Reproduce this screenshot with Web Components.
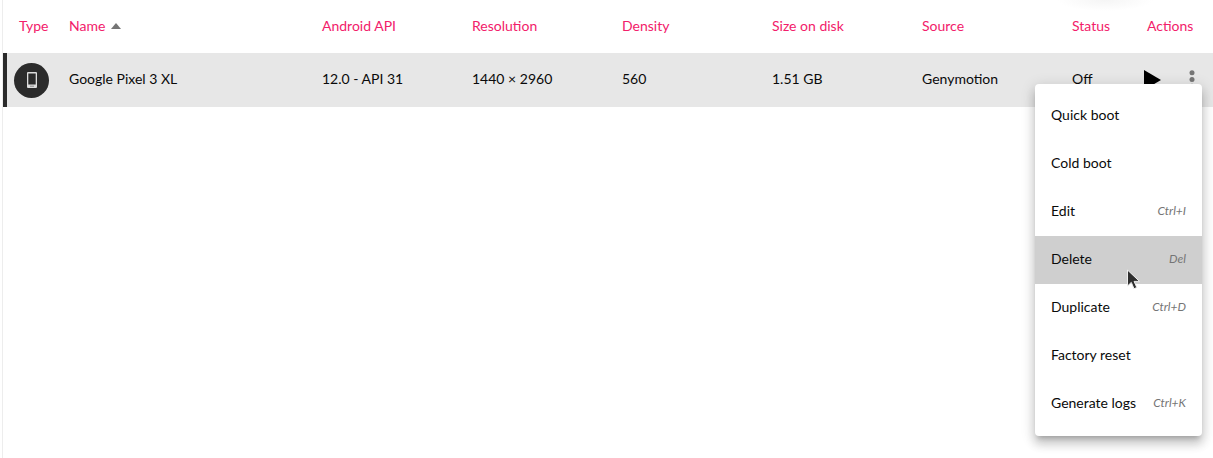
<!DOCTYPE html>
<html>
<head>
<meta charset="utf-8">
<title>Devices</title>
<style>
  html, body { margin: 0; height: 100%; background: #fff; overflow: hidden; }
  body { font: 14px Lato, sans-serif; color: #0a0a0a; }
</style>
</head>
<body>
<device-table>
  <device-row slot="rows" name="Google Pixel 3 XL" api="12.0 - API 31" res="1440 × 2960" density="560" size="1.51 GB" source="Genymotion" status="Off"></device-row>
  <device-menu slot="menu">
    <menu-item>Quick boot</menu-item>
    <menu-item>Cold boot</menu-item>
    <menu-item shortcut="Ctrl+I">Edit</menu-item>
    <menu-item shortcut="Del" active>Delete</menu-item>
    <menu-item shortcut="Ctrl+D">Duplicate</menu-item>
    <menu-item>Factory reset</menu-item>
    <menu-item shortcut="Ctrl+K">Generate logs</menu-item>
  </device-menu>
</device-table>

<script>
  "use strict";

  // shared by the header and the rows, so the columns line up
  const COLUMNS = "66px 253px 150px 150px 150px 150px 150px 75px 66px";

  class DeviceTable extends HTMLElement {
    constructor() {
      super();
      this.attachShadow({ mode: "open" });
      this.shadowRoot.innerHTML = `
        <style>
          :host { display: block; position: relative; height: 458px; box-sizing: border-box;
                  border-left: 1px solid #ededed; margin-left: 2px; overflow: hidden; }
          .head { display: grid; grid-template-columns: ${COLUMNS}; height: 53px; align-items: center;
                  color: #f2206a;
                  background: radial-gradient(ellipse 48px 11px at 1102px 0, #f5f5f5, rgba(255,255,255,0)); }
          .head span { display: flex; align-items: center; gap: 6px; padding-bottom: 2px; }
          .head span:first-child { padding-left: 16px; }
          .caret { width: 0; height: 0; border: 5px solid transparent; border-top: 0;
                   border-bottom: 6px solid #757575; }
          .cursor { position: absolute; left: 1123px; top: 269px; width: 15px; height: 22px; }
        </style>
        <div class="head">
          <span>Type</span>
          <span>Name <i class="caret"></i></span>
          <span>Android API</span>
          <span>Resolution</span>
          <span>Density</span>
          <span>Size on disk</span>
          <span>Source</span>
          <span>Status</span>
          <span>Actions</span>
        </div>
        <slot name="rows"></slot>
        <slot name="menu"></slot>
        <svg class="cursor" viewBox="0 0 15 22">
          <path d="M1.5 1v16l3.8-3.6 2.7 6.3 2.8-1.2-2.7-6.1h5.4z" fill="#2e2e2e" stroke="#eee" stroke-width="1"/>
        </svg>`;
    }
  }

  class DeviceRow extends HTMLElement {
    constructor() {
      super();
      this.attachShadow({ mode: "open" });
      const a = (n) => this.getAttribute(n);
      this.shadowRoot.innerHTML = `
        <style>
          :host { display: grid; grid-template-columns: ${COLUMNS}; height: 54px; align-items: center;
                  background: #e7e7e7; box-shadow: inset 4px 0 0 #2b2b2b; }
          .cell { padding-bottom: 4px; }
          .type { width: 35px; height: 35px; border-radius: 50%; background: #2b2b2b; margin-left: 11px;
                  display: flex; align-items: center; justify-content: center; }
          .actions { display: flex; align-items: flex-start; align-self: start; padding-top: 17px; }
          .play { margin-left: -3px; }
          .dots { margin-left: 28px; }
        </style>
        <div><div class="type">
          <svg width="10" height="16" viewBox="0 0 10 16">
            <path fill="#dcdcdc" fill-rule="evenodd" d="M1 0h8a1 1 0 0 1 1 1v14a1 1 0 0 1-1 1H1a1 1 0 0 1-1-1V1a1 1 0 0 1 1-1zm.3 1.4v11.2h7.4V1.4z"/>
            <rect x="3" y="13.7" width="4" height="1" fill="#8a8a8a"/>
          </svg>
        </div></div>
        <div class="cell">${a("name")}</div>
        <div class="cell">${a("api")}</div>
        <div class="cell">${a("res")}</div>
        <div class="cell">${a("density")}</div>
        <div class="cell">${a("size")}</div>
        <div class="cell">${a("source")}</div>
        <div class="cell">${a("status")}</div>
        <div class="actions">
          <svg class="play" width="17" height="20" viewBox="0 0 17 20"><path d="M0 0l17 10-17 10z" fill="#000"/></svg>
          <svg class="dots" width="6" height="20" viewBox="0 0 6 20">
            <circle cx="3" cy="2.8" r="2.5" fill="#767676"/><circle cx="3" cy="9.5" r="2.5" fill="#767676"/><circle cx="3" cy="16.2" r="2.5" fill="#767676"/>
          </svg>
        </div>`;
    }
  }

  class DeviceMenu extends HTMLElement {
    constructor() {
      super();
      this.attachShadow({ mode: "open" });
      this.shadowRoot.innerHTML = `
        <style>
          :host { position: absolute; left: 1032px; top: 84px; width: 167px; box-sizing: border-box;
                  padding: 8px 0; background: #fff; border-radius: 4px;
                  box-shadow: 0 5px 5px -3px rgba(0,0,0,.2), 0 8px 10px 1px rgba(0,0,0,.14), 0 3px 14px 2px rgba(0,0,0,.12); }
        </style>
        <slot></slot>`;
    }
  }

  class MenuItem extends HTMLElement {
    constructor() {
      super();
      this.attachShadow({ mode: "open" });
      const sc = this.getAttribute("shortcut");
      this.shadowRoot.innerHTML = `
        <style>
          :host { display: flex; align-items: center; justify-content: space-between; height: 48px;
                  box-sizing: border-box; padding: 0 16px 4px; color: #0a0a0a; }
          :host([active]) { background: #cfcfcf; }
          em { font-size: 12px; color: #757575; }
        </style>
        <slot></slot>${sc ? `<em>${sc}</em>` : ""}`;
    }
  }

  customElements.define("device-table", DeviceTable);
  customElements.define("device-row", DeviceRow);
  customElements.define("device-menu", DeviceMenu);
  customElements.define("menu-item", MenuItem);
</script>
</body>
</html>
